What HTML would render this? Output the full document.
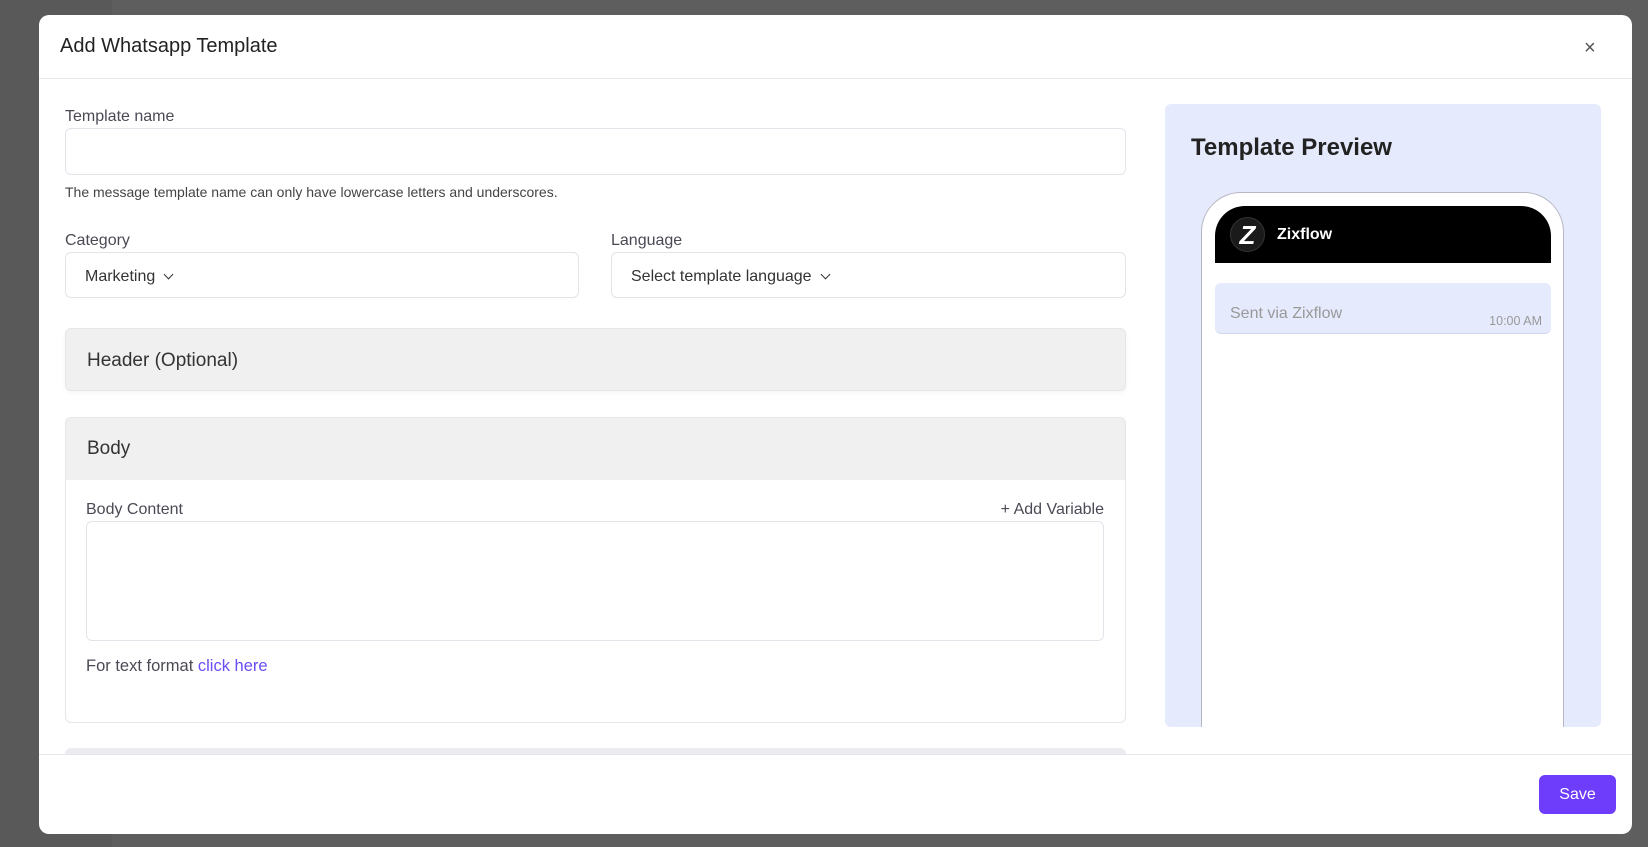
<!DOCTYPE html>
<html><head><style>
*{box-sizing:border-box;margin:0;padding:0}
body{width:1648px;height:847px;background:#5e5e5e;font-family:"Liberation Sans",sans-serif;position:relative;overflow:hidden;color:#333}
.a{position:absolute}
.modal{left:39px;top:15px;width:1593px;height:819px;background:#fff;border-radius:10px}
.inp{border:1px solid #e3e4ea;border-radius:6px;background:#fff}
.lbl{font-size:16px;color:#4a4a55}
.sel{font-size:16px;color:#333;display:flex;align-items:center;padding-left:19px}
.chev{display:inline-block;width:7px;height:7px;border-right:1.5px solid #333;border-bottom:1.5px solid #333;transform:rotate(45deg);margin-left:10px;margin-top:-5px}
</style></head><body>
<div class="a" style="left:0;top:0;width:112px;height:847px;background:#595959"></div>
<div class="a modal"></div>
<div class="a" style="left:60px;top:35px;font-size:20px;color:#222">Add Whatsapp Template</div>
<div class="a" style="left:1584px;top:37px;font-size:20px;color:#555">×</div>
<div class="a" style="left:39px;top:78px;width:1593px;height:1px;background:#e6e6ea"></div>

<div class="a lbl" style="left:65px;top:108px">Template name</div>
<div class="a inp" style="left:65px;top:128px;width:1061px;height:47px"></div>
<div class="a" style="left:65px;top:184px;font-size:14px;color:#444">The message template name can only have lowercase letters and underscores.</div>

<div class="a lbl" style="left:65px;top:232px">Category</div>
<div class="a lbl" style="left:611px;top:232px">Language</div>
<div class="a inp sel" style="left:65px;top:252px;width:514px;height:46px;padding-top:3px">Marketing<span class="chev"></span></div>
<div class="a inp sel" style="left:611px;top:252px;width:515px;height:46px;padding-top:3px">Select template language<span class="chev"></span></div>

<div class="a" style="left:65px;top:328px;width:1061px;height:63px;background:#f0f0f0;border:1px solid #e6e6e6;border-radius:6px;box-shadow:0 2px 6px rgba(0,0,0,.04)"></div>
<div class="a" style="left:87px;top:350px;font-size:19px;color:#333">Header (Optional)</div>

<div class="a" style="left:65px;top:417px;width:1061px;height:306px;border:1px solid #e6e6ea;border-radius:6px;background:#fff;overflow:hidden"><div style="height:62px;background:#f0f0f0"></div></div>
<div class="a" style="left:87px;top:438px;font-size:19px;color:#333">Body</div>
<div class="a lbl" style="left:86px;top:501px">Body Content</div>
<div class="a lbl" style="left:954px;top:501px;width:150px;text-align:right">+ Add Variable</div>
<div class="a inp" style="left:86px;top:521px;width:1018px;height:120px"></div>
<div class="a lbl" style="left:86px;top:657px;font-size:16.5px">For text format <span style="color:#6b4cf6">click here</span></div>
<div class="a" style="left:65px;top:748px;width:1061px;height:6px;background:#ececf0;border-radius:6px 6px 0 0"></div>

<div class="a" style="left:1165px;top:104px;width:436px;height:623px;background:#e6eafd;border-radius:6px;overflow:hidden">
  <div class="a" style="left:36px;top:88px;width:363px;height:600px;background:#fff;border:1px solid #b8b8c4;border-radius:40px 40px 0 0"></div>
  <div class="a" style="left:50px;top:102px;width:336px;height:57px;background:#000;border-radius:30px 30px 0 0"></div>
  <div class="a" style="left:65px;top:113px;width:35px;height:35px;border-radius:50%;background:#1a1a1a;border:1px solid #333;color:#fff;font-weight:bold;font-size:26px;text-align:center;line-height:34px;font-style:italic">Z</div>
  <div class="a" style="left:112px;top:122px;color:#fff;font-weight:bold;font-size:16px">Zixflow</div>
  <div class="a" style="left:50px;top:179px;width:336px;height:51px;background:#e6eafd;border-radius:6px;border-bottom:1px solid #d4d8ee"></div>
  <div class="a" style="left:65px;top:201px;font-size:16px;color:#999">Sent via Zixflow</div>
  <div class="a" style="left:277px;top:210px;width:100px;text-align:right;font-size:12.5px;color:#999">10:00 AM</div>
</div>
<div class="a" style="left:1191px;top:134px;font-size:24px;font-weight:bold;color:#222">Template Preview</div>

<div class="a" style="left:39px;top:754px;width:1593px;height:1px;background:#e6e6ea"></div>
<div class="a" style="left:1539px;top:775px;width:77px;height:39px;background:#6e3cfb;border-radius:6px;color:#fff;font-size:16px;text-align:center;line-height:39px">Save</div>
</body></html>
